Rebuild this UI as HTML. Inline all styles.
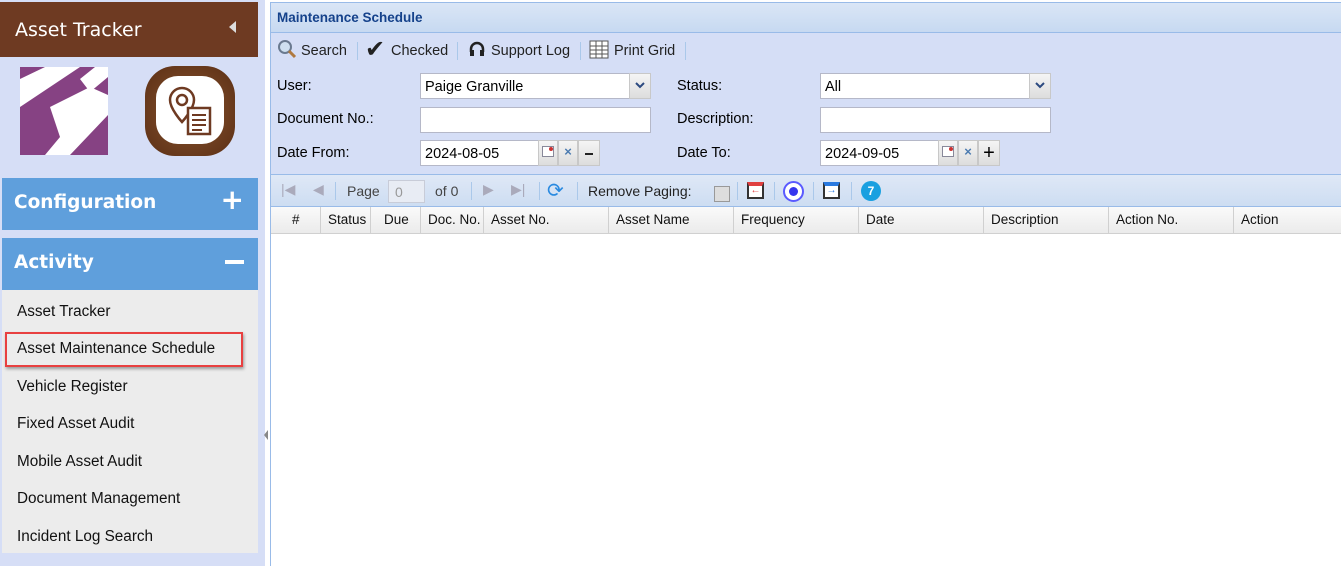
<!DOCTYPE html>
<html><head><style>
*{box-sizing:border-box;margin:0;padding:0}
body{width:1341px;height:566px;overflow:hidden;background:#fff;font-family:"Liberation Sans",Arial,sans-serif;font-size:14px;color:#000;position:relative}
.abs{position:absolute}
#side{left:0;top:0;width:265px;height:566px;background:#d6def6}
.hdr{left:0;top:2px;width:258px;height:55px;background:#6e3a22;color:#fff;font-family:"DejaVu Sans",sans-serif;font-size:19px;padding:17px 0 0 15px}
.sec{left:2px;width:256px;height:52px;background:#5f9fdc;color:#fff;font-weight:bold;font-family:"DejaVu Sans",sans-serif;font-size:18.5px;padding:14px 0 0 12px}
.menu{left:2px;top:290px;width:256px;height:263px;background:#ececec}
.mi{position:absolute;left:15px;font-family:"Liberation Sans",sans-serif;font-size:15.3px;color:#111}
#main{left:270px;top:2px;width:1071px;height:564px;border-left:1px solid #99bbe8;border-top:1px solid #99bbe8;background:#fff}
.lbl{position:absolute;font-size:14.5px}
.inp{position:absolute;background:#fff;border:1px solid #b5b8c8;height:26px;font-size:14.5px;padding:5px 4px 0}
.btn{position:absolute;height:26px;width:20px;border:1px solid #c8c8c8;background:linear-gradient(#f5f5f5,#ddd)}
.th{position:absolute;top:0;height:27px;border-right:1px solid #d0d0d0;font-size:13.5px;padding:5px 0 0 7px;color:#111}
.sep{position:absolute;width:1px;height:18px;background:#aac8ea}
</style></head><body>
<div id="side" class="abs">
 <div class="hdr abs">Asset Tracker<span style="position:absolute;left:229px;top:19px;width:0;height:0;border-top:6px solid transparent;border-bottom:6px solid transparent;border-right:7px solid #ddd"></span></div>
 <svg class="abs" style="left:20px;top:67px" width="88" height="88" viewBox="0 0 88 88"><rect width="88" height="88" fill="#864283"/><polygon points="0,12 25,0 60,0 0,40" fill="#fff"/><polygon points="30,40 70,20 88,28 88,48 50,88 25,88 40,70" fill="#fff"/><polygon points="60,12 75,0 88,0 88,10 70,25" fill="#fff"/></svg>
 <div class="abs" style="left:145px;top:66px;width:90px;height:90px;border-radius:30px;background:radial-gradient(#8a5530,#5a2e14);"></div>
 <div class="abs" style="left:156px;top:76px;width:68px;height:68px;border-radius:22px;background:#fff"></div>
 <svg class="abs" style="left:168px;top:86px" width="46" height="50" viewBox="0 0 46 50"><path d="M14 2a12 12 0 0 1 12 12c0 9-12 22-12 22S2 23 2 14A12 12 0 0 1 14 2z" fill="none" stroke="#6e3a22" stroke-width="2.5"/><circle cx="14" cy="14" r="5" fill="none" stroke="#6e3a22" stroke-width="2.5"/><rect x="20" y="22" width="22" height="26" fill="#fff" stroke="#6e3a22" stroke-width="2.5"/><path d="M24 29h14M24 34h14M24 39h14M24 44h10" stroke="#6e3a22" stroke-width="2"/></svg>
 <div class="sec abs" style="top:178px">Configuration<span style="position:absolute;right:14px;top:8px;font-size:28px;line-height:28px">+</span></div>
 <div class="sec abs" style="top:238px">Activity<span style="position:absolute;right:14px;top:22px;width:19px;height:4px;background:#fff"></span></div>
 <div class="menu abs">
  <div class="mi" style="top:13px">Asset Tracker</div>
  <div style="position:absolute;left:3px;top:42px;width:238px;height:35px;border:2px solid #e84040;box-shadow:1px 2px 3px rgba(0,0,0,.35)"></div>
  <div class="mi" style="top:50px">Asset Maintenance Schedule</div>
  <div class="mi" style="top:88px">Vehicle Register</div>
  <div class="mi" style="top:125px">Fixed Asset Audit</div>
  <div class="mi" style="top:163px">Mobile Asset Audit</div>
  <div class="mi" style="top:200px">Document Management</div>
  <div class="mi" style="top:238px">Incident Log Search</div>
 </div>
 <div class="abs" style="left:264px;top:430px;width:0;height:0;border-top:5px solid transparent;border-bottom:5px solid transparent;border-right:4px solid #888"></div>
</div>
<div id="main" class="abs">
 <div class="abs" style="left:0;top:0;width:1071px;height:30px;background:linear-gradient(#dae6f6,#c7d9f1);border-bottom:1px solid #99bbe8;color:#15428b;font-weight:bold;font-size:13.5px;padding:7px 0 0 6px">Maintenance Schedule</div>
 <div class="abs" style="left:0;top:30px;width:1071px;height:141px;background:#d5def6"></div>
 <div class="abs" style="left:0;top:30px;height:34px;width:500px;font-size:14.5px;color:#222">
  <svg class="abs" style="left:6px;top:6px" width="20" height="20"><circle cx="8" cy="8" r="6" fill="#cfe0f0" stroke="#6a7a90" stroke-width="2"/><path d="M12 12l6 6" stroke="#b07a40" stroke-width="3"/></svg>
  <span class="abs" style="left:30px;top:10px">Search</span><div class="sep" style="left:86px;top:9px"></div>
  <span class="abs" style="left:94px;top:2px;font-size:24px">✔</span><span class="abs" style="left:120px;top:10px">Checked</span><div class="sep" style="left:186px;top:9px"></div>
  <svg class="abs" style="left:197px;top:7px" width="18" height="18"><path d="M3 12V9a6 6 0 0 1 12 0v3" fill="none" stroke="#222" stroke-width="2.5"/><rect x="2" y="10" width="4" height="6" fill="#222"/><rect x="12" y="10" width="4" height="6" fill="#222"/></svg>
  <span class="abs" style="left:220px;top:10px">Support Log</span><div class="sep" style="left:309px;top:9px"></div>
  <svg class="abs" style="left:318px;top:7px" width="20" height="19"><rect x="1" y="1" width="18" height="17" fill="#fff" stroke="#555"/><path d="M1 6h18M1 10h18M1 14h18M7 1v17M13 1v17" stroke="#555"/></svg>
  <span class="abs" style="left:343px;top:10px">Print Grid</span><div class="sep" style="left:414px;top:9px"></div>
 </div>
 <div class="lbl" style="left:6px;top:75px">User:</div>
 <div class="inp" style="left:149px;top:70px;width:231px">Paige Granville</div>
 <div class="btn" style="left:358px;top:70px;width:22px"><svg class="abs" style="left:5px;top:8px" width="10" height="7"><path d="M1 1l4 4 4-4" fill="none" stroke="#2c4a80" stroke-width="2"/></svg></div>
 <div class="lbl" style="left:6px;top:108px">Document No.:</div>
 <div class="inp" style="left:149px;top:104px;width:231px"></div>
 <div class="lbl" style="left:6px;top:142px">Date From:</div>
 <div class="inp" style="left:149px;top:137px;width:120px">2024-08-05</div>
 <div class="btn" style="left:267px;top:137px"></div><div class="abs" style="left:271px;top:143px;width:12px;height:11px;border:1px solid #889;background:#fff"><div class="abs" style="right:0;top:0;width:4px;height:4px;border-radius:50%;background:#c33"></div></div>
 <div class="btn" style="left:287px;top:137px;color:#4a7ab0;font-size:13px;text-align:center;padding-top:3px;font-weight:bold">×</div>
 <div class="btn" style="left:307px;top:137px;width:22px"><div class="abs" style="left:6px;top:12px;width:8px;height:2px;background:#222"></div></div>
 <div class="lbl" style="left:406px;top:75px">Status:</div>
 <div class="inp" style="left:549px;top:70px;width:231px">All</div>
 <div class="btn" style="left:758px;top:70px;width:22px"><svg class="abs" style="left:5px;top:8px" width="10" height="7"><path d="M1 1l4 4 4-4" fill="none" stroke="#2c4a80" stroke-width="2"/></svg></div>
 <div class="lbl" style="left:406px;top:108px">Description:</div>
 <div class="inp" style="left:549px;top:104px;width:231px"></div>
 <div class="lbl" style="left:406px;top:142px">Date To:</div>
 <div class="inp" style="left:549px;top:137px;width:120px">2024-09-05</div>
 <div class="btn" style="left:667px;top:137px"></div><div class="abs" style="left:671px;top:143px;width:12px;height:11px;border:1px solid #889;background:#fff"><div class="abs" style="right:0;top:0;width:4px;height:4px;border-radius:50%;background:#c33"></div></div>
 <div class="btn" style="left:687px;top:137px;color:#4a7ab0;font-size:13px;text-align:center;padding-top:3px;font-weight:bold">×</div>
 <div class="btn" style="left:707px;top:137px;width:22px;font-size:20px;text-align:center;line-height:24px">+</div>
 <div class="abs" style="left:0;top:171px;width:1071px;height:33px;background:linear-gradient(#dfe8f6,#cdddf2);border-top:1px solid #99bbe8;border-bottom:1px solid #99bbe8;font-size:14px;color:#222">
  <span class="abs" style="left:10px;top:6px;color:#aab">|◀</span><span class="abs" style="left:42px;top:6px;color:#aab">◀</span><div class="sep" style="left:64px;top:7px"></div>
  <span class="abs" style="left:76px;top:8px;color:#444">Page</span><div class="abs" style="left:117px;top:5px;width:37px;height:23px;border:1px solid #c8ccd8;background:#e8ecf4;color:#999;padding:3px 6px">0</div>
  <span class="abs" style="left:164px;top:8px;color:#444">of 0</span><div class="sep" style="left:200px;top:7px"></div>
  <span class="abs" style="left:212px;top:6px;color:#aab">▶</span><span class="abs" style="left:240px;top:6px;color:#aab">▶|</span><div class="sep" style="left:268px;top:7px"></div>
  <span class="abs" style="left:276px;top:3px;color:#2a8ae0;font-size:20px">⟳</span><div class="sep" style="left:306px;top:7px"></div>
  <span class="abs" style="left:317px;top:8px">Remove Paging:</span>
  <div class="abs" style="left:443px;top:11px;width:16px;height:16px;border:1px solid #999;background:#ddd"></div><div class="sep" style="left:466px;top:7px"></div>
  <div class="abs" style="left:476px;top:7px;width:17px;height:17px;border:2px solid #333;border-top:4px solid #e04040;background:#fff;color:#e04040;font-size:10px;line-height:10px;text-align:center">←</div><div class="sep" style="left:503px;top:7px"></div>
  <div class="abs" style="left:512px;top:6px;width:21px;height:21px;border-radius:50%;border:2px solid #5a5aff;background:#fff"><div class="abs" style="left:4px;top:4px;width:9px;height:9px;border-radius:50%;background:#3535ee"></div></div><div class="sep" style="left:542px;top:7px"></div>
  <div class="abs" style="left:552px;top:7px;width:17px;height:17px;border:2px solid #333;border-top:4px solid #2a7ae0;background:#fff;color:#2a7ae0;font-size:10px;line-height:10px;text-align:center">→</div><div class="sep" style="left:580px;top:7px"></div>
  <div class="abs" style="left:590px;top:6px;width:20px;height:20px;border-radius:50%;background:#1aa0e0;color:#fff;font-weight:bold;font-size:12px;text-align:center;line-height:20px">7</div>
 </div>
 <div class="abs" style="left:0;top:204px;width:1071px;height:27px;background:linear-gradient(#fafafa,#ebebeb);border-bottom:1px solid #d0d0d0">
  <div class="th" style="left:0;width:50px;padding-left:21px">#</div>
  <div class="th" style="left:50px;width:50px">Status</div>
  <div class="th" style="left:100px;width:50px;padding-left:13px">Due</div>
  <div class="th" style="left:150px;width:63px">Doc. No.</div>
  <div class="th" style="left:213px;width:125px">Asset No.</div>
  <div class="th" style="left:338px;width:125px">Asset Name</div>
  <div class="th" style="left:463px;width:125px">Frequency</div>
  <div class="th" style="left:588px;width:125px">Date</div>
  <div class="th" style="left:713px;width:125px">Description</div>
  <div class="th" style="left:838px;width:125px">Action No.</div>
  <div class="th" style="left:963px;width:108px;border-right:none">Action</div>
 </div>
</div>
</body></html>
